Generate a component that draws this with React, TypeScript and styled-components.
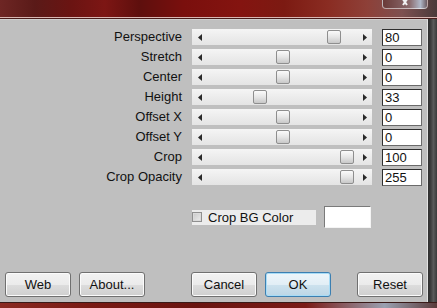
import React from "react";
import styled, { createGlobalStyle } from "styled-components";

const GlobalStyle = createGlobalStyle`
  html, body {
    margin: 0;
    padding: 0;
    overflow: hidden;
    background: #6a1a16;
  }
`;

interface Param {
  label: string;
  value: string;
  thumb: number;
}

const params: Param[] = [
  { label: "Perspective", value: "80", thumb: 135 },
  { label: "Stretch", value: "0", thumb: 84 },
  { label: "Center", value: "0", thumb: 84 },
  { label: "Height", value: "33", thumb: 61 },
  { label: "Offset X", value: "0", thumb: 84 },
  { label: "Offset Y", value: "0", thumb: 84 },
  { label: "Crop", value: "100", thumb: 148 },
  { label: "Crop Opacity", value: "255", thumb: 148 },
];

const LeftArrow = () => (
  <svg width="4" height="7" viewBox="0 0 4 7">
    <polygon points="4,0 0,3.5 4,7" fill="#2a2a2a" />
  </svg>
);

const RightArrow = () => (
  <svg width="4" height="7" viewBox="0 0 4 7">
    <polygon points="0,0 4,3.5 0,7" fill="#2a2a2a" />
  </svg>
);

// only the lower half of the close cross is visible above the panel
const CloseCross = () => (
  <svg width="12" height="6" viewBox="0 0 12 6">
    <path
      d="M1 -5 L8 5 M11 -5 L4 5"
      stroke="#f2f2f2"
      strokeWidth="2"
      fill="none"
    />
  </svg>
);

const App: React.FunctionComponent = () => {
  return (
    <>
      <GlobalStyle />
      <Window>
        <TitleStrip>
          <CloseButton>
            <CloseCross />
          </CloseButton>
        </TitleStrip>
        <Body>
          <Panel>
            <ParamGrid>
              {params.map((p, idx) => (
                <React.Fragment key={idx}>
                  <Label>{p.label}</Label>
                  <Track>
                    <LeftArrow />
                    <Thumb $left={p.thumb} />
                    <RightArrow />
                  </Track>
                  <ValueBox>{p.value}</ValueBox>
                </React.Fragment>
              ))}
            </ParamGrid>

            <OptionRow>
              <CheckLabel>
                <CheckBox />
                <span>Crop BG Color</span>
              </CheckLabel>
              <ColorSwatch />
            </OptionRow>

            <Footer>
              <Button>Web</Button>
              <Button $gap={8}>About...</Button>
              <Button $gap={46}>Cancel</Button>
              <Button $gap={8} $focused>
                OK
              </Button>
              <Button $gap={26}>Reset</Button>
            </Footer>
          </Panel>
          <Frame />
        </Body>
        <BottomStrip />
      </Window>
    </>
  );
};

export default App;

interface ThumbProps {
  $left: number;
}

interface ButtonProps {
  $gap?: number;
  $focused?: boolean;
}

const Window = styled.div`
  width: 437px;
  height: 308px;
  display: flex;
  flex-direction: column;
  font-family: "Liberation Sans", Arial, sans-serif;
  font-size: 13px;
  color: #111;
  overflow: hidden;
`;

const TitleStrip = styled.div`
  height: 17px;
  flex: none;
  display: flex;
  justify-content: flex-end;
  padding-right: 9px;
  border-bottom: 1px solid #d9b6b2;
  box-shadow: 0 1px 0 #4a1c1a;
  margin-bottom: 1px;
  background: linear-gradient(
    90deg,
    #6e2624 0%,
    #5a1a18 8%,
    #6a1412 16%,
    #7d1614 24%,
    #5e0f0d 32%,
    #7a0f0d 42%,
    #841410 55%,
    #7c1a12 65%,
    #8a2c22 75%,
    #8e4038 84%,
    #7e5050 92%,
    #4a3a3a 100%
  );
`;

const CloseButton = styled.div`
  width: 44px;
  height: 8px;
  border: 1px solid rgba(255, 255, 255, 0.55);
  border-top: none;
  border-radius: 0 0 4px 4px;
  background: linear-gradient(90deg, #6a3a38, #8a6a6c 60%, #b0b8c8 85%, #6a5a60);
  display: flex;
  justify-content: center;
  align-items: flex-start;
`;

const Body = styled.div`
  flex: 1;
  display: flex;
  min-height: 0;
`;

const Panel = styled.div`
  width: 428px;
  flex: none;
  display: flex;
  flex-direction: column;
  background: #bfbfbf;
  border-top: 1px solid #cfcfcf;
  border-right: 1px solid #e2e2e2;
  box-sizing: border-box;
  padding-top: 9px;
`;

const Frame = styled.div`
  flex: 1;
  background: linear-gradient(
    90deg,
    #2e2e2e 0%,
    #3c3c3c 30%,
    #5a5a5a 60%,
    #3a3a3a 100%
  );
`;

const BottomStrip = styled.div`
  height: 5px;
  flex: none;
  border-top: 1px solid #3a1a18;
  background: linear-gradient(
    90deg,
    #8a2a22 0%,
    #7a1a14 20%,
    #6a1410 45%,
    #7a1a16 70%,
    #9aa0b0 88%,
    #5a3a3a 100%
  );
`;

const ParamGrid = styled.div`
  display: grid;
  grid-template-columns: 182px 180px 40px;
  grid-auto-rows: 16px;
  column-gap: 10px;
  row-gap: 4px;
`;

const Label = styled.div`
  text-align: right;
  line-height: 16px;
  white-space: nowrap;
`;

const Track = styled.div`
  position: relative;
  display: flex;
  align-items: center;
  justify-content: space-between;
  padding: 0 5px 0 6px;
  background: linear-gradient(#f5f5f5, #ececec 50%, #e4e4e4);
`;

const Thumb = styled.div<ThumbProps>`
  position: absolute;
  top: 1px;
  left: ${(props) => props.$left}px;
  width: 12px;
  height: 12px;
  border: 1px solid #8e8e8e;
  border-radius: 2px;
  background: linear-gradient(#fbfbfb, #e6e6e6 50%, #c8c8c8);
`;

const ValueBox = styled.div`
  box-sizing: border-box;
  height: 17px;
  background: #fff;
  border: 1px solid #6a6a6a;
  border-top-color: #2e2e2e;
  border-left-color: #2e2e2e;
  padding-left: 2px;
  line-height: 15px;
`;

const OptionRow = styled.div`
  display: flex;
  align-items: center;
  gap: 8px;
  margin-top: 21px;
  padding-left: 192px;
`;

const CheckLabel = styled.div`
  width: 124px;
  height: 15px;
  display: flex;
  align-items: center;
  gap: 6px;
  background: #ececec;
  line-height: 15px;
`;

const CheckBox = styled.div`
  width: 8px;
  height: 8px;
  border: 1px solid #8f8f8f;
  background: linear-gradient(135deg, #c8c8c8, #ececec);
  box-shadow: inset 0 0 0 1px #dadada;
`;

const ColorSwatch = styled.div`
  width: 45px;
  height: 20px;
  background: #fff;
  border: 1px solid #f4f4f4;
  border-top-color: #7a7a7a;
  border-left-color: #7a7a7a;
`;

const Footer = styled.div`
  margin-top: auto;
  display: flex;
  padding: 0 0 5px 5px;
`;

const Button = styled.div<ButtonProps>`
  box-sizing: border-box;
  width: 66px;
  height: 25px;
  margin-left: ${(props) => props.$gap || 0}px;
  display: flex;
  align-items: center;
  justify-content: center;
  border: 1px solid ${(props) => (props.$focused ? "#3c7fb1" : "#707070")};
  border-radius: 3px;
  box-shadow: inset 0 0 0 1px
    ${(props) => (props.$focused ? "#a8dcf6" : "#fbfbfb")};
  background: ${(props) =>
    props.$focused
      ? "linear-gradient(#eef6fa, #e2eef6 50%, #cde2ee 51%, #bcd6e6)"
      : "linear-gradient(#f2f2f2, #ebebeb 50%, #dddddd 51%, #cfcfcf)"};
`;
